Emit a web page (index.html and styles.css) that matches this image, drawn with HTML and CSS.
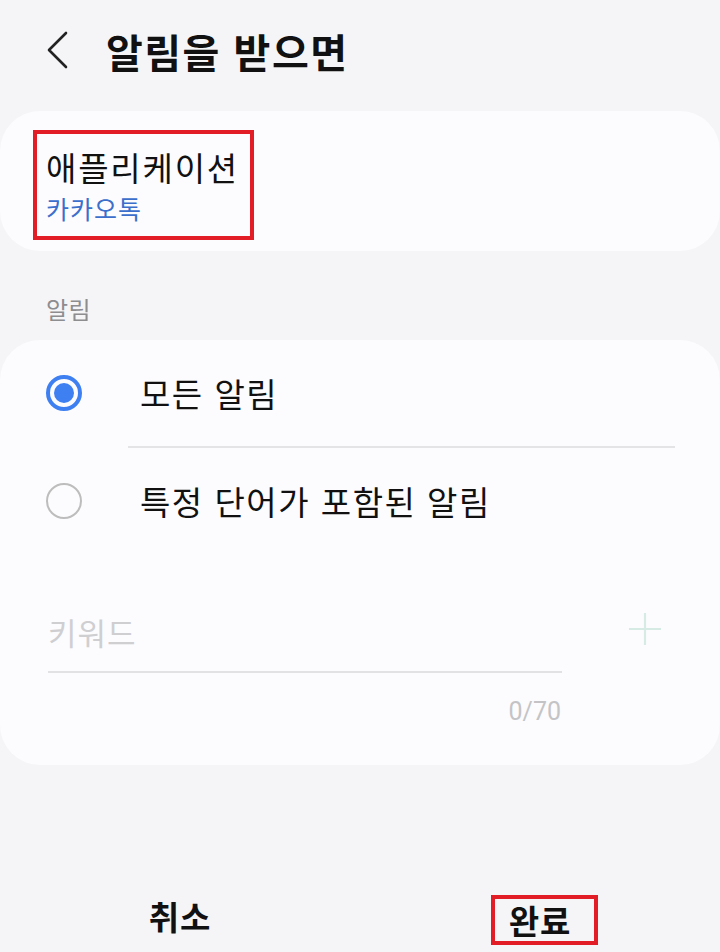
FILE: index.html
```html
<!DOCTYPE html>
<html lang="ko">
<head>
<meta charset="utf-8">
<link rel="stylesheet" href="styles.css">
</head>
<body>
<div class="screen">
  <header class="topbar">
    <svg class="back" width="24" height="40" viewBox="0 0 24 40"><path d="M20 3 L3 20 L20 37" fill="none" stroke="#222" stroke-width="2.6" stroke-linecap="round" stroke-linejoin="round"/></svg>
    <h1 class="title">알림을 받으면</h1>
  </header>

  <section class="card app-card">
    <div class="mark">
      <div class="app-label">애플리케이션</div>
      <div class="app-name">카카오톡</div>
    </div>
  </section>

  <div class="section-label">알림</div>

  <section class="card options">
    <div class="row">
      <span class="radio on"></span>
      <span class="row-text">모든 알림</span>
    </div>
    <div class="divider"></div>
    <div class="row">
      <span class="radio"></span>
      <span class="row-text">특정 단어가 포함된 알림</span>
    </div>
    <div class="keyword">
      <div class="keyword-field">
        <span class="placeholder">키워드</span>
      </div>
      <svg class="plus" width="34" height="34" viewBox="0 0 34 34"><path d="M17 1 V33 M1 17 H33" stroke="#d6ebe4" stroke-width="2.2"/></svg>
    </div>
    <div class="counter">0/70</div>
  </section>

  <footer class="actions">
    <div class="action"><span class="btn">취소</span></div>
    <div class="action"><span class="btn mark-btn">완료</span></div>
  </footer>
</div>
</body>
</html>
```

FILE: styles.css
```css
* { box-sizing: border-box; margin: 0; padding: 0; }
html, body { width: 720px; height: 952px; }
body {
  background: #f5f5f7;
  font-family: "Noto Sans CJK KR", "Noto Sans", sans-serif;
  color: #111;
  overflow: hidden;
}
.screen { display: flex; flex-direction: column; height: 952px; }

.topbar {
  height: 104px;
  display: flex;
  align-items: center;
  padding-left: 46px;
  padding-bottom: 2px;
}
.back { margin-right: 36px; margin-top: -2px; }
.title {
  font-size: 40px;
  font-weight: 700;
  letter-spacing: 1.5px;
  color: #111;
  line-height: 1;
}

.card {
  background: #fcfcfe;
  border-radius: 40px;
}
.app-card {
  margin-top: 7px;
  height: 140px;
  padding: 19px 0 0 33px;
}
.mark {
  display: inline-block;
  width: 221px;
  height: 110px;
  border: 4px solid #e31d25;
  padding: 13px 0 0 9px;
}
.app-label {
  font-size: 33px;
  letter-spacing: 1.8px;
  line-height: 40px;
  color: #111;
  white-space: nowrap;
}
.app-name {
  font-size: 25px;
  letter-spacing: 1px;
  line-height: 34px;
  margin-top: 4px;
  color: #3b6fcb;
}

.section-label {
  height: 89px;
  padding: 43px 0 0 46px;
  font-size: 24px;
  letter-spacing: 0.5px;
  line-height: 30px;
  color: #8d8d90;
}

.options {
  height: 425px;
  display: flex;
  flex-direction: column;
}
.row {
  height: 106px;
  display: flex;
  align-items: center;
  padding-left: 46px;
}
.radio {
  width: 36px;
  height: 36px;
  border-radius: 50%;
  border: 2.5px solid #bdbdbd;
  margin-right: 58px;
  flex: none;
  position: relative;
}
.radio.on {
  border: 4px solid #3e7ff2;
}
.radio.on::after {
  content: "";
  position: absolute;
  left: 4px; top: 4px;
  width: 20px; height: 20px;
  border-radius: 50%;
  background: #3e7ff2;
}
.row-text {
  font-size: 33px;
  letter-spacing: 1.5px;
  line-height: 40px;
  color: #111;
}
.divider {
  height: 2px;
  background: #e4e4e6;
  margin: 0 45px 0 128px;
}

.keyword {
  display: flex;
  align-items: flex-start;
  padding: 47px 0 0 48px;
}
.keyword-field {
  width: 514px;
  height: 72px;
  border-bottom: 2px solid #e2e2e4;
  padding-top: 13px;
}
.placeholder {
  font-size: 31px;
  letter-spacing: 1px;
  line-height: 36px;
  color: #cfcfd1;
}
.plus { margin: 11px 0 0 66px; }
.counter {
  width: 561px;
  text-align: right;
  margin-top: 24px;
  font-family: "Roboto", "Noto Sans", sans-serif;
  font-size: 25px;
  line-height: 30px;
  color: #c4c4c6;
}

.actions {
  margin-top: auto;
  height: 66px;
  display: flex;
}
.action {
  flex: 1;
  display: flex;
  justify-content: center;
  align-items: flex-start;
  padding-top: 10px;
}
.btn {
  font-size: 33px;
  font-weight: 700;
  letter-spacing: 1px;
  line-height: 40px;
  color: #111;
}
.mark-btn {
  border: 4px solid #e31d25;
  padding: 1px 23px 1px 14px;
  margin: -1px 0 0 9px;
}
```
